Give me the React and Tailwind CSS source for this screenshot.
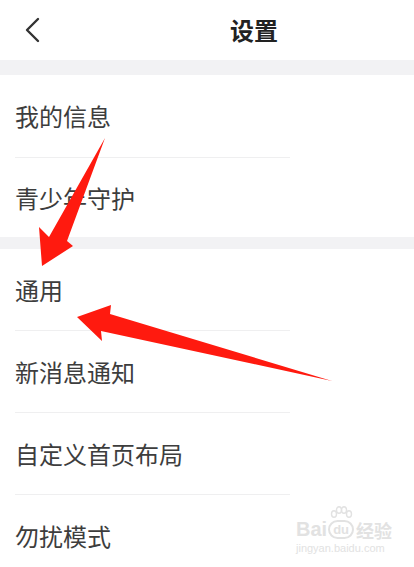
import React from "react";

const font = { fontFamily: '"Noto Sans CJK SC", "Noto Sans", sans-serif' };

function Row({ label, h = "h-[82px]", border = true }) {
  return (
    <div className={`${h} flex flex-col justify-between pl-[15px]`}>
      <div className="flex-1 flex items-center">
        <span className="text-[24px] leading-none text-[#3d3d3d]">{label}</span>
      </div>
      {border ? <div className="h-px bg-[#efeff0] w-[275px]" /> : null}
    </div>
  );
}

export default function App() {
  return (
    <div className="relative w-[414px] h-[567px] overflow-hidden bg-white" style={font}>
      <div className="h-[60px] flex items-center relative">
        <svg className="ml-[22px]" width="20" height="28" viewBox="0 0 20 28">
          <path d="M16 3 L5 14 L16 25" fill="none" stroke="#333" strokeWidth="2.4" strokeLinecap="round" strokeLinejoin="round" />
        </svg>
        <span className="absolute left-[230px] text-[24px] font-bold text-[#222] leading-none">设置</span>
      </div>
      <div className="h-[15px] bg-[#f2f2f4]" />
      <Row label="我的信息" h="h-[83px]" />
      <Row label="青少年守护" h="h-[79px]" border={false} />
      <div className="h-[12px] bg-[#f2f2f4]" />
      <Row label="通用" h="h-[82px]" />
      <Row label="新消息通知" />
      <Row label="自定义首页布局" />
      <Row label="勿扰模式" border={false} />

      <svg className="absolute left-0 top-0 pointer-events-none" width="414" height="567" viewBox="0 0 414 567">
        <polygon points="105,138 67,241 73,246 42,266 39,227 49,237" fill="#ff1a0f" />
        <polygon points="77,317 111,305 110,314 332,381 101,331 102,341" fill="#ff1a0f" />
      </svg>

      <div className="absolute left-[296px] top-[506px] flex flex-col items-start text-[#e2e2e2] leading-none">
        <div className="flex items-end">
          <span className="text-[20px] font-bold" style={{ fontFamily: '"Liberation Sans", sans-serif' }}>Bai</span>
          <div className="relative ml-[1px] flex flex-col items-center">
            <svg width="24" height="14" viewBox="0 0 24 14">
              <ellipse cx="5" cy="8" rx="2.5" ry="3.2" fill="none" stroke="#e2e2e2" strokeWidth="1.4" />
              <ellipse cx="10" cy="4" rx="2.5" ry="3.2" fill="none" stroke="#e2e2e2" strokeWidth="1.4" />
              <ellipse cx="15" cy="4" rx="2.5" ry="3.2" fill="none" stroke="#e2e2e2" strokeWidth="1.4" />
              <ellipse cx="20" cy="8" rx="2.5" ry="3.2" fill="none" stroke="#e2e2e2" strokeWidth="1.4" />
            </svg>
            <span className="text-[13px] font-bold border-2 border-[#e2e2e2] rounded-full px-[3px] py-[1px]" style={{ fontFamily: '"Liberation Sans", sans-serif' }}>du</span>
          </div>
          <span className="ml-[2px] text-[18px] font-bold">经验</span>
        </div>
        <span className="mt-[4px] text-[11px]" style={{ fontFamily: '"Liberation Sans", sans-serif' }}>jingyan.baidu.com</span>
      </div>
    </div>
  );
}
